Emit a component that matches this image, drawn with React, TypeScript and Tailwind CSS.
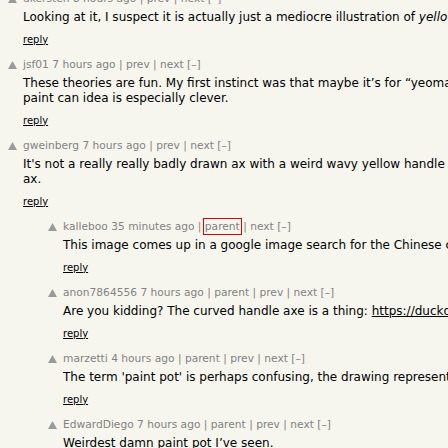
type Comment = {
  user: string;
  age: string;
  depth: number;
  links: string[];
  lines: React.ReactNode[];
  mark?: boolean;
};

const comments: Comment[] = [
  {
    user: "dkersten",
    age: "8 hours ago",
    depth: 0,
    links: ["prev", "next"],
    lines: [
      <>
        Looking at it, I suspect it is actually just a mediocre illustration of{" "}
        <i>yellow paint leaking from a tin</i>.
      </>,
    ],
  },
  {
    user: "jsf01",
    age: "7 hours ago",
    depth: 0,
    links: ["prev", "next"],
    lines: [
      "These theories are fun. My first instinct was that maybe it’s for “yeoman” but the",
      "paint can idea is especially clever.",
    ],
  },
  {
    user: "gweinberg",
    age: "7 hours ago",
    depth: 0,
    links: ["prev", "next"],
    lines: [
      "It's not a really really badly drawn ax with a weird wavy yellow handle coming out of the top of an",
      "ax.",
    ],
  },
  {
    user: "kalleboo",
    age: "35 minutes ago",
    depth: 1,
    links: ["parent", "next"],
    mark: true,
    lines: ["This image comes up in a google image search for the Chinese character for paint."],
  },
  {
    user: "anon7864556",
    age: "7 hours ago",
    depth: 1,
    links: ["parent", "prev", "next"],
    lines: [
      <>
        Are you kidding? The curved handle axe is a thing:{" "}
        <a className="underline">https://duckduckgo.com/?q=curved+handle+axe</a>
      </>,
    ],
  },
  {
    user: "marzetti",
    age: "4 hours ago",
    depth: 1,
    links: ["parent", "prev", "next"],
    lines: ["The term 'paint pot' is perhaps confusing, the drawing represents a pot of paint."],
  },
  {
    user: "EdwardDiego",
    age: "7 hours ago",
    depth: 1,
    links: ["parent", "prev", "next"],
    lines: ["Weirdest damn paint pot I’ve seen."],
  },
];

const Arrow = () => (
  <svg width="9" height="8" viewBox="0 0 9 8" className="mt-[3px]">
    <polygon points="4.5,0 9,8 0,8" fill="#9a9a9a" />
  </svg>
);

const Row = ({ c }: { c: Comment }) => {
  return (
    <div className="flex">
      <div className={c.depth ? "w-[40px] shrink-0" : "w-0 shrink-0"} />
      <div className="w-[23px] shrink-0 pl-[8px]">
        <Arrow />
      </div>
      <div>
        <div className="text-[10.67px] leading-[13px] h-[13px] text-[#828282] whitespace-nowrap">
          {c.user} {c.age}
          {c.links.map((l) => (
            <span key={l}>
              {" | "}
              {c.mark && l === "parent" ? (
                <span className="outline outline-1 outline-[#e00000] outline-offset-[1px]">{l}</span>
              ) : (
                l
              )}
            </span>
          ))}{" "}
          [–]
        </div>
        <div className="mt-[5px] text-[12px] leading-[15px] text-black whitespace-nowrap">
          {c.lines.map((line, i) => (
            <div key={i}>{line}</div>
          ))}
        </div>
        <div className="mt-[8px] mb-[12px] text-[10px] leading-[13px] h-[13px]">
          <a className="underline text-black">reply</a>
        </div>
      </div>
    </div>
  );
};

export default function App() {
  return (
    <div className="w-[448px] h-[448px] overflow-hidden bg-[#f6f6ef] font-['DejaVu_Sans',Verdana,sans-serif]">
      <div className="w-[1100px] -mt-[8.5px]">
        {comments.map((c) => (
          <Row key={c.user} c={c} />
        ))}
      </div>
    </div>
  );
}
